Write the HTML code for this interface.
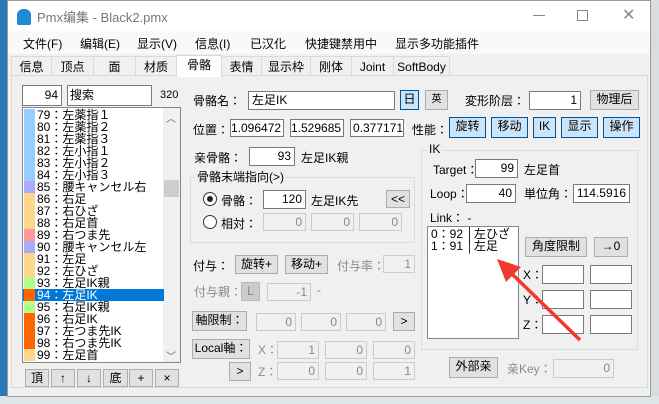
<!DOCTYPE html>
<html><head><meta charset="utf-8"><style>
*{box-sizing:border-box;margin:0;padding:0}
body{width:659px;height:404px;overflow:hidden;background:#e8ecef;font-family:"Liberation Sans","Noto Sans CJK JP",sans-serif;font-size:12px;color:#000;position:relative}
.a{position:absolute;white-space:nowrap}
.in{position:absolute;background:#fff;border:1px solid #7a7a7a;text-align:right;padding-right:3px;line-height:16px;font-family:"Liberation Sans","Noto Sans CJK JP",sans-serif;font-size:12px;overflow:hidden}
.dis{background:#f0f0f0;border-color:#ccc;color:#888}
.bt{position:absolute;background:#e1e1e1;border:1px solid #adadad;text-align:center;line-height:17px}
.bl{background:#cce4f7;border-color:#005499}
.g{color:#8a8a8a}
.gb{position:absolute;border:1px solid #dcdcdc}
.tab{position:absolute;top:56px;height:20px;border:1px solid #d9d9d9;border-bottom:none;background:#f0f0f0;text-align:center;line-height:20px}
.row{position:absolute;left:23px;width:141px;height:12px;line-height:12px;font-size:12px}
.sw{position:absolute;left:1px;top:0;width:11px;height:12px}
.row span.t{position:absolute;left:14px;font-family:"Liberation Sans","Noto Sans CJK JP",sans-serif;font-size:12px}
</style></head><body>
<div class="a" style="left:0;top:0;width:7px;height:404px;background:#2a7ab5"></div>
<div class="a" style="left:651px;top:0;width:8px;height:404px;background:#d8dde2"></div>
<div class="a" style="left:0;top:396px;width:659px;height:8px;background:#dfe6e8"></div>
<div class="a" style="left:7px;top:0;width:644px;height:397px;background:#f0f0f0;border:1px solid #9a9a9a"></div>
<div class="a" style="left:8px;top:1px;width:642px;height:30px;background:#fff"></div>
<div class="a" style="left:17px;top:9px;width:14px;height:16px;background:#1d8ad6;border-radius:6px 6px 2px 2px"></div>
<div class="a" style="left:37px;top:7px;font-size:13px;color:#777">Pmx编集 - Black2.pmx</div>
<div class="a" style="left:533px;top:15px;width:12px;height:1px;background:#888"></div>
<div class="a" style="left:577px;top:10px;width:11px;height:11px;border:1px solid #888"></div>
<div class="a" style="left:622px;top:5px;font-size:16px;color:#888">✕</div>
<div class="a" style="left:8px;top:31px;width:642px;height:23px;background:#f9f9f9"></div>
<div class="a" style="left:23px;top:35px">文件(F)</div>
<div class="a" style="left:80px;top:35px">编辑(E)</div>
<div class="a" style="left:137px;top:35px">显示(V)</div>
<div class="a" style="left:195px;top:35px">信息(I)</div>
<div class="a" style="left:250px;top:35px">已汉化</div>
<div class="a" style="left:305px;top:35px">快捷键禁用中</div>
<div class="a" style="left:395px;top:35px">显示多功能插件</div>
<div class="tab" style="left:11px;width:41px">信息</div>
<div class="tab" style="left:51px;width:43px">顶点</div>
<div class="tab" style="left:93px;width:43px">面</div>
<div class="tab" style="left:135px;width:42px">材质</div>
<div class="tab" style="left:221px;width:41px">表情</div>
<div class="tab" style="left:261px;width:50px">显示枠</div>
<div class="tab" style="left:310px;width:42px">刚体</div>
<div class="tab" style="left:351px;width:43px">Joint</div>
<div class="tab" style="left:393px;width:57px">SoftBody</div>
<div class="a" style="left:11px;top:75px;width:637px;height:313px;border:1px solid #d9d9d9;background:#f0f0f0"></div>
<div class="a" style="left:176px;top:55px;width:46px;height:22px;background:#fff;border:1px solid #d9d9d9;border-bottom:none;text-align:center;line-height:19px">骨骼</div>
<div class="in" style="left:22px;top:85px;width:40px;height:21px;line-height:19px">94</div>
<div class="in" style="left:67px;top:85px;width:85px;height:21px;line-height:19px;text-align:left;padding-left:2px">搜索</div>
<div class="a" style="left:160px;top:89px;font-size:11px">320</div>
<div class="a" style="left:22px;top:107px;width:159px;height:256px;background:#fff;border:1px solid #828790"></div>
<div class="a" style="left:163px;top:108px;width:17px;height:254px;background:#f0f0f0"></div>
<div class="a" style="left:164px;top:180px;width:15px;height:17px;background:#cdcdcd"></div>
<div class="a" style="left:166px;top:110px;font-size:10px;color:#606060">︿</div>
<div class="a" style="left:166px;top:348px;font-size:10px;color:#606060">﹀</div>
<div class="row" style="top:109px"><div class="sw" style="background:#99ccff"></div><span class="t">79：左薬指１</span></div>
<div class="row" style="top:121px"><div class="sw" style="background:#99ccff"></div><span class="t">80：左薬指２</span></div>
<div class="row" style="top:133px"><div class="sw" style="background:#99ccff"></div><span class="t">81：左薬指３</span></div>
<div class="row" style="top:145px"><div class="sw" style="background:#99ccff"></div><span class="t">82：左小指１</span></div>
<div class="row" style="top:157px"><div class="sw" style="background:#99ccff"></div><span class="t">83：左小指２</span></div>
<div class="row" style="top:169px"><div class="sw" style="background:#99ccff"></div><span class="t">84：左小指３</span></div>
<div class="row" style="top:181px"><div class="sw" style="background:#aaaaff"></div><span class="t">85：腰キャンセル右</span></div>
<div class="row" style="top:193px"><div class="sw" style="background:#ffd588"></div><span class="t">86：右足</span></div>
<div class="row" style="top:205px"><div class="sw" style="background:#ffd588"></div><span class="t">87：右ひざ</span></div>
<div class="row" style="top:217px"><div class="sw" style="background:#ffd588"></div><span class="t">88：右足首</span></div>
<div class="row" style="top:229px"><div class="sw" style="background:#ff9999"></div><span class="t">89：右つま先</span></div>
<div class="row" style="top:241px"><div class="sw" style="background:#aaaaff"></div><span class="t">90：腰キャンセル左</span></div>
<div class="row" style="top:253px"><div class="sw" style="background:#ffd588"></div><span class="t">91：左足</span></div>
<div class="row" style="top:265px"><div class="sw" style="background:#ffd588"></div><span class="t">92：左ひざ</span></div>
<div class="row" style="top:277px"><div class="sw" style="background:#b3ff88"></div><span class="t">93：左足IK親</span></div>
<div class="row" style="top:289px;background:#0078d7;color:#fff"><div class="sw" style="background:#ff6600"></div><span class="t">94：左足IK</span></div>
<div class="row" style="top:301px"><div class="sw" style="background:#b3ff88"></div><span class="t">95：右足IK親</span></div>
<div class="row" style="top:313px"><div class="sw" style="background:#ff6600"></div><span class="t">96：右足IK</span></div>
<div class="row" style="top:325px"><div class="sw" style="background:#ff6600"></div><span class="t">97：左つま先IK</span></div>
<div class="row" style="top:337px"><div class="sw" style="background:#ff6600"></div><span class="t">98：右つま先IK</span></div>
<div class="row" style="top:349px"><div class="sw" style="background:#ffd588"></div><span class="t">99：左足首</span></div>
<div class="bt" style="left:25px;top:369px;width:24px;height:18px">頂</div>
<div class="bt" style="left:51px;top:369px;width:24px;height:18px">↑</div>
<div class="bt" style="left:77px;top:369px;width:24px;height:18px">↓</div>
<div class="bt" style="left:103px;top:369px;width:25px;height:18px">底</div>
<div class="bt" style="left:129px;top:369px;width:24px;height:18px">+</div>
<div class="bt" style="left:155px;top:369px;width:24px;height:18px">×</div>
<div class="a" style="left:193px;top:92px">骨骼名：</div>
<div class="in" style="left:248px;top:91px;width:147px;height:19px;text-align:left;padding-left:3px">左足IK</div>
<div class="bt bl" style="left:400px;top:90px;width:19px;height:20px">日</div>
<div class="bt" style="left:425px;top:90px;width:23px;height:20px;font-size:10px">英</div>
<div class="a" style="left:465px;top:92px">変形阶层：</div>
<div class="in" style="left:529px;top:91px;width:52px;height:19px">1</div>
<div class="bt" style="left:590px;top:90px;width:49px;height:20px">物理后</div>
<div class="a" style="left:193px;top:121px">位置：</div>
<div class="in" style="left:230px;top:119px;width:54px;height:18px">1.096472</div>
<div class="in" style="left:290px;top:119px;width:54px;height:18px">1.529685</div>
<div class="in" style="left:350px;top:119px;width:54px;height:18px;text-align:left;padding-left:2px">0.3771718</div>
<div class="a" style="left:412px;top:121px">性能：</div>
<div class="bt bl" style="left:449px;top:117px;width:37px;height:21px">旋转</div>
<div class="bt bl" style="left:491px;top:117px;width:37px;height:21px">移动</div>
<div class="bt bl" style="left:533px;top:117px;width:23px;height:21px">IK</div>
<div class="bt bl" style="left:561px;top:117px;width:37px;height:21px">显示</div>
<div class="bt bl" style="left:603px;top:117px;width:37px;height:21px">操作</div>
<div class="a" style="left:194px;top:149px">亲骨骼：</div>
<div class="in" style="left:249px;top:147px;width:46px;height:19px">93</div>
<div class="a" style="left:301px;top:149px">左足IK親</div>
<div class="gb" style="left:190px;top:177px;width:225px;height:66px"></div>
<div class="a" style="left:195px;top:168px;background:#f0f0f0;padding:0 2px">骨骼末端指向(&gt;)</div>
<div class="a" style="left:203px;top:192px;width:14px;height:14px;border:1px solid #333;border-radius:50%;background:#fff"></div>
<div class="a" style="left:207px;top:196px;width:6px;height:6px;border-radius:50%;background:#222"></div>
<div class="a" style="left:221px;top:192px">骨骼：</div>
<div class="in" style="left:263px;top:190px;width:43px;height:19px">120</div>
<div class="a" style="left:311px;top:192px">左足IK先</div>
<div class="bt" style="left:386px;top:190px;width:24px;height:18px">&lt;&lt;</div>
<div class="a" style="left:203px;top:215px;width:14px;height:14px;border:1px solid #333;border-radius:50%;background:#fff"></div>
<div class="a" style="left:221px;top:215px">相対：</div>
<div class="in dis" style="left:263px;top:213px;width:43px;height:18px">0</div>
<div class="in dis" style="left:311px;top:213px;width:43px;height:18px">0</div>
<div class="in dis" style="left:359px;top:213px;width:43px;height:18px">0</div>
<div class="a" style="left:193px;top:257px">付与：</div>
<div class="bt" style="left:235px;top:255px;width:43px;height:19px">旋转+</div>
<div class="bt" style="left:285px;top:255px;width:43px;height:19px">移动+</div>
<div class="a g" style="left:337px;top:257px">付与率：</div>
<div class="in dis" style="left:383px;top:255px;width:32px;height:18px">1</div>
<div class="a g" style="left:194px;top:283px">付与親：</div>
<div class="bt" style="left:241px;top:282px;width:19px;height:19px;background:#ccc;border-color:#bbb;color:#888">L</div>
<div class="in dis" style="left:267px;top:283px;width:44px;height:18px">-1</div>
<div class="a g" style="left:317px;top:283px">-</div>
<div class="bt" style="left:192px;top:311px;width:55px;height:20px">軸限制：</div>
<div class="in dis" style="left:256px;top:313px;width:40px;height:18px">0</div>
<div class="in dis" style="left:301px;top:313px;width:40px;height:18px">0</div>
<div class="in dis" style="left:346px;top:313px;width:40px;height:18px">0</div>
<div class="bt" style="left:393px;top:312px;width:22px;height:19px">&gt;</div>
<div class="bt" style="left:192px;top:339px;width:58px;height:20px">Local軸：</div>
<div class="a g" style="left:258px;top:341px">X：</div>
<div class="in dis" style="left:277px;top:341px;width:42px;height:18px">1</div>
<div class="in dis" style="left:325px;top:341px;width:42px;height:18px">0</div>
<div class="in dis" style="left:373px;top:341px;width:42px;height:18px">0</div>
<div class="bt" style="left:229px;top:362px;width:22px;height:19px">&gt;</div>
<div class="a g" style="left:258px;top:363px">Z：</div>
<div class="in dis" style="left:277px;top:362px;width:42px;height:18px">0</div>
<div class="in dis" style="left:325px;top:362px;width:42px;height:18px">0</div>
<div class="in dis" style="left:373px;top:362px;width:42px;height:18px">1</div>
<div class="gb" style="left:421px;top:150px;width:217px;height:200px"></div>
<div class="a" style="left:427px;top:142px;background:#f0f0f0;padding:0 2px">IK</div>
<div class="a" style="left:433px;top:161px">Target：</div>
<div class="in" style="left:475px;top:159px;width:43px;height:19px">99</div>
<div class="a" style="left:524px;top:161px">左足首</div>
<div class="a" style="left:430px;top:185px">Loop：</div>
<div class="in" style="left:466px;top:184px;width:50px;height:19px">40</div>
<div class="a" style="left:524px;top:185px">単位角：</div>
<div class="in" style="left:573px;top:184px;width:57px;height:19px">114.5916</div>
<div class="a" style="left:430px;top:209px">Link：&nbsp;-</div>
<div class="a" style="left:427px;top:226px;width:92px;height:113px;background:#fff;border:1px solid #828790"></div>
<div class="a" style="left:431px;top:228px;line-height:12px;font-size:12px">0：92 │左ひざ<br>1：91 │左足</div>
<div class="bt" style="left:525px;top:237px;width:62px;height:20px">角度限制</div>
<div class="bt" style="left:594px;top:237px;width:34px;height:20px">→0</div>
<div class="a" style="left:523px;top:266px">X：</div>
<div class="in" style="left:542px;top:265px;width:42px;height:19px"></div>
<div class="in" style="left:590px;top:265px;width:42px;height:19px"></div>
<div class="a" style="left:523px;top:291px">Y：</div>
<div class="in" style="left:542px;top:290px;width:42px;height:19px"></div>
<div class="in" style="left:590px;top:290px;width:42px;height:19px"></div>
<div class="a" style="left:523px;top:316px">Z：</div>
<div class="in" style="left:542px;top:315px;width:42px;height:19px"></div>
<div class="in" style="left:590px;top:315px;width:42px;height:19px"></div>
<div class="bt" style="left:449px;top:357px;width:49px;height:21px">外部亲</div>
<div class="a g" style="left:507px;top:360px">亲Key：</div>
<div class="in dis" style="left:553px;top:359px;width:61px;height:19px">0</div>
<svg class="a" style="left:0;top:0" width="659" height="404"><line x1="580" y1="340" x2="510" y2="272" stroke="#f03a2e" stroke-width="3.5"/><polygon points="497,259 521,267 506,282" fill="#f03a2e"/></svg>
</body></html>
